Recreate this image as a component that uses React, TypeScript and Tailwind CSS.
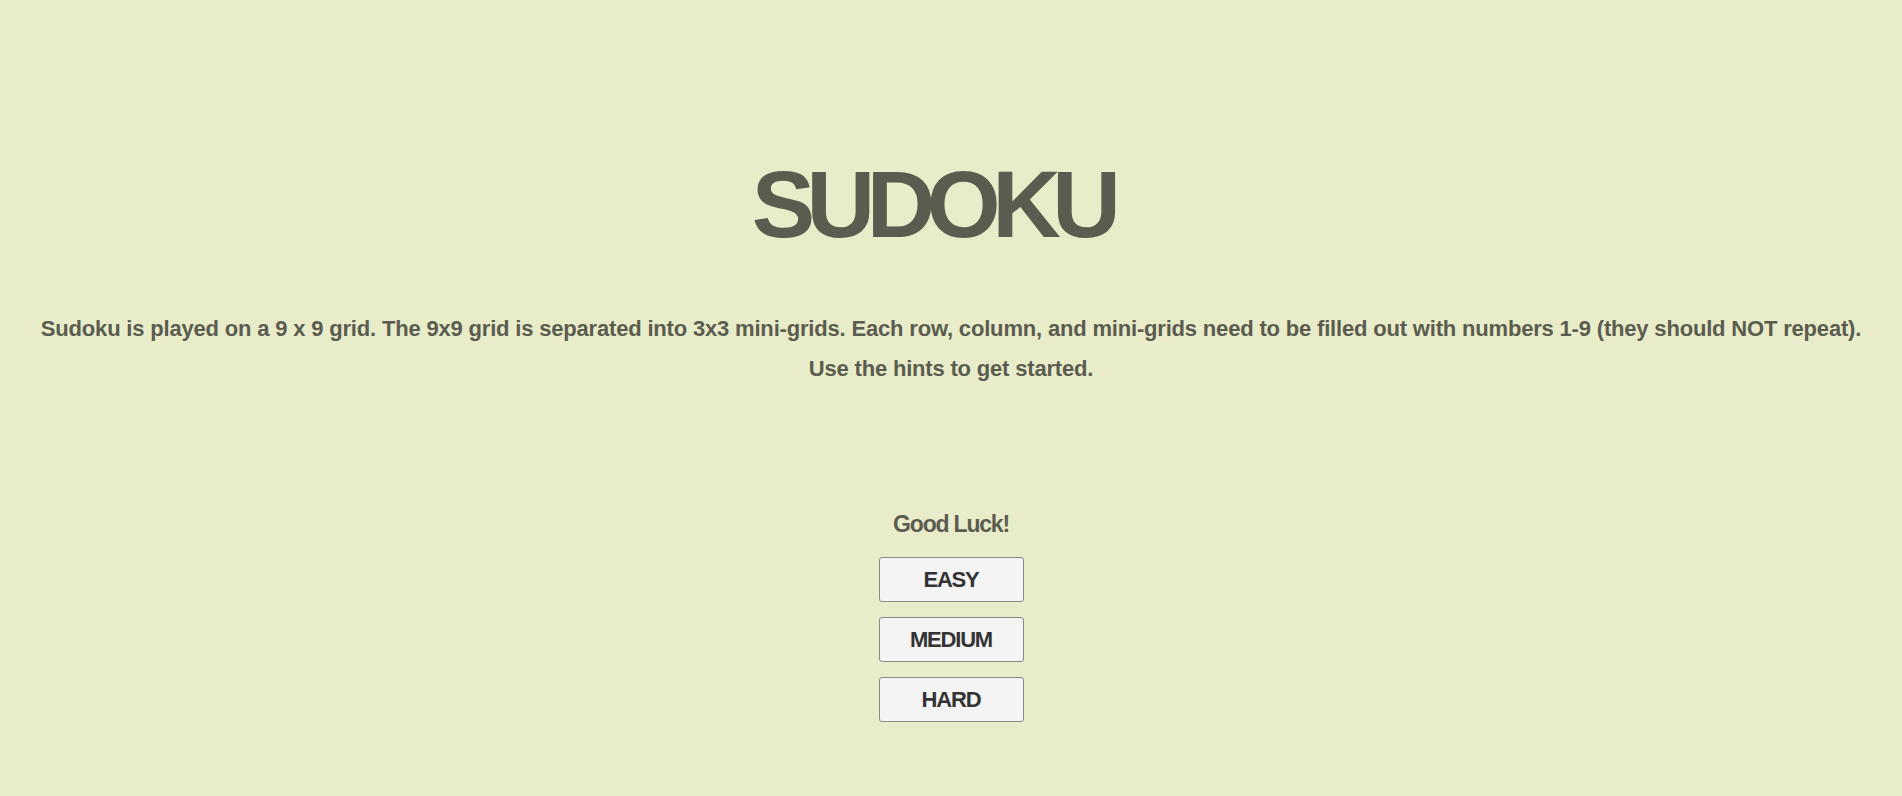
import React from "react";

export default function App() {
  return (
    <div className="min-h-[796px] w-full bg-[#e8ecc8] flex flex-col items-center text-[#5b5c50]" style={{ fontFamily: '"Liberation Sans", Arial, sans-serif' }}>
      <h1 className="mt-[157px] h-[94px] leading-none text-[95px] font-bold tracking-[-8.5px] mr-[38px]">SUDOKU</h1>
      <p className="mt-[58px] text-center text-[22px] leading-[40px] font-bold tracking-[-0.18px] text-[#5b5c50]">
        Sudoku is played on a 9 x 9 grid. The 9x9 grid is separated into 3x3 mini-grids. Each row, column, and mini-grids need to be filled out with numbers 1-9 (they should NOT repeat).
        <br />
        Use the hints to get started.
      </p>
      <div className="mt-[124px] h-[23px] leading-none text-[23px] font-bold tracking-[-1.2px]">Good Luck!</div>
      <div className="mt-[21px] flex flex-col gap-[15px]">
        {["EASY", "MEDIUM", "HARD"].map((l) => (
          <button key={l} className="w-[145px] h-[45px] bg-[#f4f4f4] border border-[#8a8a85] rounded-[3px] text-[22px] font-bold text-[#333] tracking-[-1.2px] flex items-center justify-center">
            {l}
          </button>
        ))}
      </div>
    </div>
  );
}
